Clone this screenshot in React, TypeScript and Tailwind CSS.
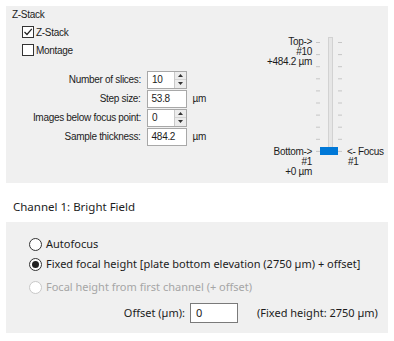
import React from 'react';

const SpinButton = () => (
  <div className="w-[12px] h-full border-l border-[#c9c9c9] bg-[#ececec] flex flex-col">
    <div className="flex-1 flex items-center justify-center border-b border-[#d4d4d4]">
      <svg width="5" height="3" viewBox="0 0 5 3"><path d="M0 3 L2.5 0 L5 3 Z" fill="#333" /></svg>
    </div>
    <div className="flex-1 flex items-center justify-center">
      <svg width="5" height="3" viewBox="0 0 5 3"><path d="M0 0 L2.5 3 L5 0 Z" fill="#333" /></svg>
    </div>
  </div>
);

const FieldRow = ({ label, value, spin, unit }: { label: string; value: string; spin?: boolean; unit?: string }) => (
  <div className="h-[19px] flex items-center">
    <div className="w-[135px] text-right whitespace-nowrap">{label}</div>
    <div className="ml-[6px] w-[40px] h-[18px] border border-[#a8a8a8] bg-white flex">
      <div className="flex-1 pl-[4px] leading-[16px]">{value}</div>
      {spin && <SpinButton />}
    </div>
    {unit && <div className="ml-[6px]">{unit}</div>}
  </div>
);

const Checkbox = ({ checked, label }: { checked?: boolean; label: string }) => (
  <div className="h-[18px] flex items-center pl-[16px]">
    <div className="w-[12px] h-[12px] border border-[#333] bg-white flex items-center justify-center">
      {checked && (
        <svg width="10" height="10" viewBox="0 0 10 10">
          <path d="M1.5 5 L4 7.5 L8.8 1.8" stroke="#222" strokeWidth="1.2" fill="none" />
        </svg>
      )}
    </div>
    <span className="ml-[2px]">{label}</span>
  </div>
);

const Radio = ({ checked, disabled, label }: { checked?: boolean; disabled?: boolean; label: string }) => (
  <div className={`flex items-center pl-[23px] ${disabled ? 'text-[#a6a6a6]' : ''}`}>
    <div
      className={`w-[13px] h-[13px] rounded-full border bg-white flex items-center justify-center ${
        disabled ? 'border-[#c8c8c8]' : 'border-[#333]'
      }`}
    >
      {checked && <div className="w-[7px] h-[7px] rounded-full bg-[#222]" />}
    </div>
    <span className="ml-[4px] whitespace-nowrap">{label}</span>
  </div>
);

const ticks = Array.from({ length: 10 }, (_, i) => 7 + i * 12.1);

export default function App() {
  return (
    <div className="w-[394px] h-[341px] bg-white pt-[6px] text-[#1c1c1c] overflow-hidden">
      {/* Z-Stack group */}
      <div className="mx-[6px] h-[177px] bg-[#f0f0f0] flex font-['Liberation_Sans',sans-serif] text-[10px] tracking-[-0.3px]">
        <div className="w-[200px] pt-[2px]">
          <div className="pl-[6px] leading-[13px]">Z-Stack</div>
          <div className="mt-[2px]">
            <Checkbox checked label="Z-Stack" />
            <Checkbox label="Montage" />
          </div>
          <div className="mt-[11px]">
            <FieldRow label="Number of slices:" value="10" spin />
            <FieldRow label="Step size:" value="53.8" unit="µm" />
            <FieldRow label="Images below focus point:" value="0" spin />
            <FieldRow label="Sample thickness:" value="484.2" unit="µm" />
          </div>
        </div>

        {/* focus slider */}
        <div className="flex items-start leading-[10px]">
          <div className="w-[106px] pt-[31px] text-right whitespace-nowrap">
            <div>Top-&gt;</div>
            <div>#10</div>
            <div>+484.2 µm</div>
            <div className="mt-[80px]">Bottom-&gt;</div>
            <div>#1</div>
            <div>+0 µm</div>
          </div>
          <svg className="ml-[4px] mt-[29px]" width="28" height="122" viewBox="0 0 28 122">
            <rect x="12.5" y="2.5" width="4" height="116" fill="#e6e6e6" stroke="#d2d2d2" />
            {ticks.map((y, i) => (
              <g key={i}>
                <rect x="0" y={y} width="4" height="1" fill="#c6c6c6" />
                <rect x="22" y={y} width="4" height="1" fill="#c6c6c6" />
              </g>
            ))}
            <rect x="4" y="112" width="18" height="8" fill="#0078d7" />
          </svg>
          <div className="ml-[3px] pt-[141px] whitespace-nowrap">
            <div>&lt;- Focus</div>
            <div className="pl-[1px]">#1</div>
          </div>
        </div>
      </div>

      {/* Channel group */}
      <div className="font-['Noto_Sans',sans-serif] text-[11px]">
        <div className="mt-[16px] pl-[13px] text-[11.5px] leading-[16px]">Channel 1: Bright Field</div>
        <div className="mt-[7px] mx-[6px] h-[111px] bg-[#f0f0f0] pt-[12px] leading-[20px]">
          <Radio label="Autofocus" />
          <Radio checked label="Fixed focal height [plate bottom elevation (2750 µm) + offset]" />
          <div className="mt-[3px]">
            <Radio disabled label="Focal height from first channel (+ offset)" />
          </div>
          <div className="mt-[6px] flex items-center whitespace-nowrap">
            <div className="w-[179px] text-right">Offset (µm):</div>
            <div className="ml-[5px] w-[48px] h-[20px] border border-[#7a7a7a] bg-white pl-[5px] leading-[18px]">0</div>
            <div className="ml-[19px]">(Fixed height: 2750 µm)</div>
          </div>
        </div>
      </div>
    </div>
  );
}
